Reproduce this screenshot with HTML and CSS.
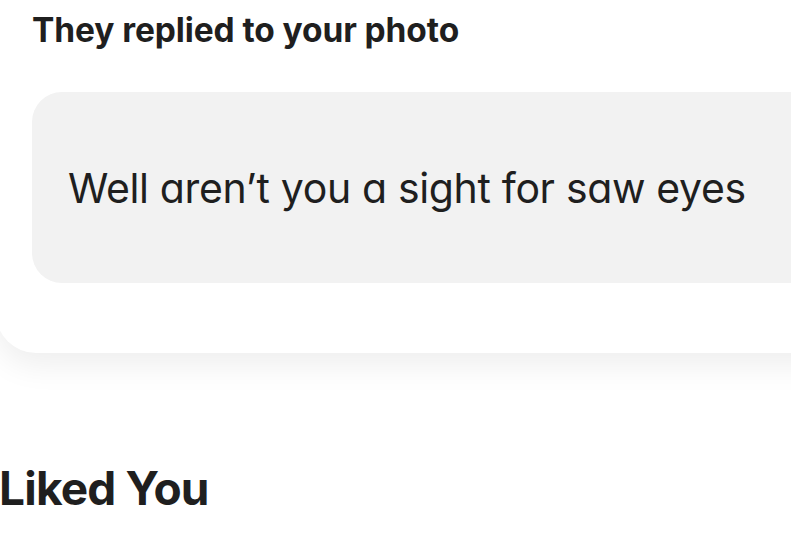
FILE: index.html
```html
<!DOCTYPE html>
<html>
<head>
<meta charset="utf-8">
<link rel="stylesheet" href="styles.css">
</head>
<body>
<div class="page">
  <section class="card">
    <h2 class="card-title">They replied to your photo</h2>
    <div class="reply">
      <p class="reply-text">Well aren’t you a sight for saw eyes</p>
    </div>
  </section>
  <h1 class="section-title">Liked You</h1>
</div>
</body>
</html>
```
FILE: styles.css
```css
html, body {
  margin: 0;
  padding: 0;
  background: #ffffff;
  overflow: hidden;
}
body {
  width: 791px;
  height: 538px;
  font-family: "Inter", "Liberation Sans", sans-serif;
  color: #1f1f1f;
}
.page {
  display: flex;
  flex-direction: column;
}
.card {
  margin-top: -40px;
  margin-left: -4px;
  width: 980px;
  background: #ffffff;
  border-radius: 40px;
  box-shadow: 0 12px 32px rgba(0, 0, 0, 0.07);
  padding: 52px 0 70px 36px;
  box-sizing: border-box;
}
.card-title {
  margin: 0;
  font-size: 33.5px;
  font-weight: 700;
  line-height: 36px;
  letter-spacing: -0.1px;
}
.reply {
  margin-top: 44px;
  height: 191px;
  background: #f2f2f2;
  border-radius: 30px;
  display: flex;
  align-items: center;
  padding-left: 36px;
}
.reply-text {
  margin: 0;
  font-size: 41px;
  font-weight: 400;
  font-feature-settings: "cv11";
  letter-spacing: -0.35px;
}
.section-title {
  margin: 107px 0 0 -1px;
  font-size: 46px;
  font-weight: 700;
  line-height: 56px;
  letter-spacing: -0.8px;
}
```
